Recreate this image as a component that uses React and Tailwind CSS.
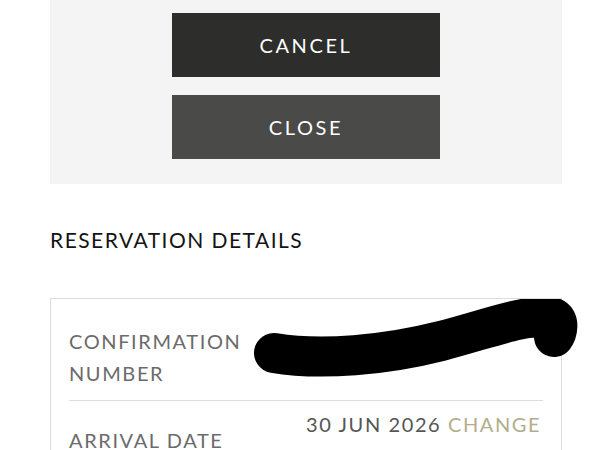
import React from "react";

const Redaction = () => (
  <svg className="absolute left-[200px] top-0 pointer-events-none" width="330" height="80" viewBox="250 296 330 80">
    <path d="M 273 350 C 320 358, 385 352, 440 338 C 490 325, 520 312, 550 314 C 560 316, 556 330, 553 334" fill="none" stroke="#000" strokeWidth="40" strokeLinecap="round" strokeLinejoin="round" />
  </svg>
);

export default function App() {
  return (
    <div className="w-[600px] h-[450px] overflow-hidden bg-white font-['Lato',sans-serif]">
      {/* action panel */}
      <section className="ml-[50px] w-[512px] bg-[#f4f4f4] pt-[13px] pb-[25px] flex flex-col items-center gap-[18px]">
        <button className="w-[268px] h-[64px] bg-[#2d2d2b] text-white text-[20px] tracking-[0.13em]">CANCEL</button>
        <button className="w-[268px] h-[64px] bg-[#4a4a48] text-white text-[20px] tracking-[0.13em]">CLOSE</button>
      </section>

      <h2 className="ml-[50px] mt-[43px] text-[21px] leading-[26px] tracking-[0.07em] text-[#141414]">RESERVATION DETAILS</h2>

      <div className="relative ml-[50px] w-[512px] mt-[45px] border border-[#dcdcdc] pl-[18px] pr-[18px]">
        <div className="flex pt-[26px] pb-[11px] border-b border-[#dcdcdc]">
          <div className="w-[237px] text-[20px] leading-[32px] tracking-[0.08em] text-[#6b6b6b]">
            CONFIRMATION<br />NUMBER
          </div>
          <div className="flex-1" />
        </div>
        <div className="flex items-center pt-[7px] pb-[10px]">
          <div className="w-[237px] text-[20px] leading-[32px] tracking-[0.08em] text-[#6b6b6b]">ARRIVAL DATE</div>
          <div className="flex-1 text-[20px] leading-[32px] tracking-[0.08em] text-[#555555]">
            30 JUN 2026 <span className="text-[#b3ad8d]">CHANGE DATES</span>
          </div>
        </div>
        <Redaction />
      </div>
    </div>
  );
}
